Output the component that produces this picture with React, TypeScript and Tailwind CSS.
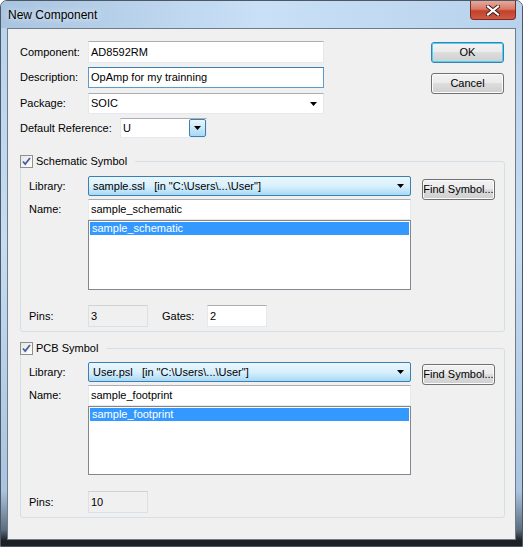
import React from "react";

// small black triangle used by the combo boxes
function Arrow() {
  return (
    <svg width="7" height="4" viewBox="0 0 7 4" className="shrink-0">
      <path d="M0 0h7L3.5 4z" fill="#000" />
    </svg>
  );
}

function TextBox({
  value,
  className = "",
  focused = false,
  disabled = false,
}: {
  value: string;
  className?: string;
  focused?: boolean;
  disabled?: boolean;
}) {
  const border = focused
    ? "border-[#5b9bd0] border-t-[#3d7bad]"
    : disabled
    ? "border-[#dcdfe3] border-t-[#cfd2d6]"
    : "border-[#e3e9ef] border-t-[#abadb3]";
  return (
    <div
      className={`flex items-center border pl-[2px] ${border} ${
        disabled ? "bg-[#f0f0f0]" : "bg-white"
      } ${className}`}
    >
      <span className="whitespace-pre">{value}</span>
    </div>
  );
}

function Combo({ value, className = "" }: { value: string; className?: string }) {
  return (
    <div
      className={`flex items-center justify-between border border-[#e3e9ef] border-t-[#abadb3] bg-white pl-[2px] pr-[6px] ${className}`}
    >
      <span className="whitespace-pre">{value}</span>
      <Arrow />
    </div>
  );
}

function BlueCombo({ value }: { value: string }) {
  return (
    <div className="flex h-[20px] w-[323px] items-center justify-between rounded-[2px] border border-[#3c7fb1] bg-gradient-to-b from-[#eaf6fd] via-[#d9f0fc] to-[#a7d9f5] pl-[4px] pr-[6px]">
      <span className="whitespace-pre">{value}</span>
      <Arrow />
    </div>
  );
}

function Button({
  label,
  className = "",
  focused = false,
}: {
  label: string;
  className?: string;
  focused?: boolean;
}) {
  return (
    <div
      className={`flex items-center justify-center rounded-[3px] border ${
        focused
          ? "border-[#3c7fb1] shadow-[inset_0_0_0_1px_#48d5fd]"
          : "border-[#707070] shadow-[inset_0_0_0_1px_#fcfcfc]"
      } bg-[linear-gradient(to_bottom,#f2f2f2_0%,#ebebeb_49%,#dddddd_50%,#cfcfcf_100%)] ${className}`}
    >
      {label}
    </div>
  );
}

function CheckBox() {
  return (
    <div className="flex h-[13px] w-[13px] shrink-0 items-center justify-center border border-[#8e8f8f] bg-gradient-to-br from-[#e6e6e6] to-white">
      <svg width="9" height="9" viewBox="0 0 9 9">
        <path d="M1 4.5l2.2 2.5L8 1" fill="none" stroke="#4a5f97" strokeWidth="1.8" />
      </svg>
    </div>
  );
}

function ListBox({ item, height }: { item: string; height: string }) {
  return (
    <div className={`w-[323px] border border-[#828790] bg-white pt-px pl-px ${height}`}>
      <div className="flex h-[13px] w-[319px] items-center bg-[#3399ff] pl-[2px] text-white">
        {item}
      </div>
    </div>
  );
}

function Group({
  title,
  library,
  name,
  top,
  libMt,
  findMt,
  listH,
  pinsMt,
  pb,
  pins,
  gates,
}: {
  title: string;
  library: string;
  name: string;
  top: string;
  libMt: string;
  findMt: string;
  listH: string;
  pinsMt: string;
  pb: string;
  pins: string;
  gates?: string;
}) {
  return (
    <div className={`w-[485px] rounded-[3px] border border-[#d5dfe5] ${top} ${pb}`}>
      <div className="-mt-[7px] -ml-px flex h-[13px] w-fit items-center gap-[3px] bg-[#f0f0f0] pr-[8px]">
        <CheckBox />
        <span>{title}</span>
      </div>
      <div className="pl-[8px]">
        <div className={`flex h-[20px] ${libMt}`}>
          <div className="flex w-[59px] items-center">Library:</div>
          <BlueCombo value={library} />
          <Button label="Find Symbol..." className={`ml-[11px] h-[21px] w-[73px] ${findMt}`} />
        </div>
        <div className="mt-[3px] flex">
          <div className="flex h-[21px] w-[59px] items-center">Name:</div>
          <div className="flex flex-col">
            <TextBox value={name} className="h-[21px] w-[323px]" />
            <ListBox item={name} height={listH} />
          </div>
        </div>
        <div className={`flex h-[22px] items-center ${pinsMt}`}>
          <div className="w-[59px]">Pins:</div>
          <TextBox value={pins} disabled className="h-full w-[60px]" />
          {gates && (
            <>
              <div className="ml-[14px] w-[45px]">Gates:</div>
              <TextBox value={gates} className="h-full w-[60px]" />
            </>
          )}
        </div>
      </div>
    </div>
  );
}

export default function App() {
  return (
    <div className="h-[547px] w-[523px] font-['Liberation_Sans',Arial,sans-serif] text-[11px] text-black">
      <div className="flex h-full w-full flex-col rounded-t-[7px] border border-[#4c5866] bg-[linear-gradient(180deg,#b9d3ec_0%,#c5dcf2_45%,#a9c4df_90%,#5d6e80_97%,#1d2126_99%)]">
        {/* title bar */}
        <div className="flex h-[27px] items-start justify-between rounded-t-[6px] bg-gradient-to-r from-[#a9c4e0] via-[#c9e0f6] to-[#b8d2ec]">
          <span className="pl-[7px] pt-[7px] text-[12px] leading-[14px] [text-shadow:0_0_6px_#ffffff]">
            New Component
          </span>
          <div className="mr-[6px] flex h-[19px] w-[46px] items-center justify-center rounded-b-[4px] border border-t-0 border-[#7a2b22] bg-[linear-gradient(to_bottom,#e6a89b_0%,#d97a68_45%,#c3412b_55%,#cf5a43_100%)]">
            <svg width="14" height="11" viewBox="0 0 14 11">
              <path
                d="M2 1.5L12 9.5M12 1.5L2 9.5"
                stroke="#3a1a16"
                strokeWidth="4"
                strokeLinecap="square"
              />
              <path
                d="M2 1.5L12 9.5M12 1.5L2 9.5"
                stroke="#ffffff"
                strokeWidth="2.2"
                strokeLinecap="square"
              />
            </svg>
          </div>
        </div>

        {/* client area */}
        <div className="ml-[6px] h-[512px] w-[509px] border border-[#6f7d8b] bg-[#f0f0f0] pl-[12px] pt-[12px]">
          <div className="flex w-[484px] justify-between">
            <div className="flex flex-col">
              <div className="flex h-[22px] items-center">
                <div className="w-[68px]">Component:</div>
                <TextBox value="AD8592RM" className="h-full w-[236px]" />
              </div>
              <div className="mt-[4px] flex h-[21px] items-center">
                <div className="w-[68px]">Description:</div>
                <TextBox value="OpAmp for my trainning" focused className="h-full w-[236px]" />
              </div>
              <div className="mt-[5px] flex h-[21px] items-center">
                <div className="w-[68px]">Package:</div>
                <Combo value="SOIC" className="h-full w-[236px]" />
              </div>
              <div className="mt-[4px] flex h-[20px] items-center">
                <div className="w-[100px]">Default Reference:</div>
                <div className="flex h-full w-[87px] border border-[#e3e9ef] border-t-[#abadb3] bg-white">
                  <span className="flex flex-1 items-center pl-[2px]">U</span>
                  <div className="flex w-[17px] items-center justify-center rounded-[2px] border border-[#3c7fb1] bg-gradient-to-b from-[#eaf6fd] to-[#a7d9f5]">
                    <Arrow />
                  </div>
                </div>
              </div>
            </div>
            <div className="flex flex-col pt-px">
              <Button label="OK" focused className="h-[21px] w-[73px]" />
              <Button label="Cancel" className="mt-[10px] h-[21px] w-[73px]" />
            </div>
          </div>

          <Group
            title="Schematic Symbol"
            library={'sample.ssl   [in "C:\\Users\\...\\User"]'}
            name="sample_schematic"
            top="mt-[23px]"
            libMt="mt-[8px]"
            findMt="mt-[3px]"
            listH="h-[70px]"
            pinsMt="mt-[15px]"
            pb="pb-[4px]"
            pins="3"
            gates="2"
          />
          <Group
            title="PCB Symbol"
            library={'User.psl   [in "C:\\Users\\...\\User"]'}
            name="sample_footprint"
            top="mt-[16px]"
            libMt="mt-[7px]"
            findMt="mt-[2px]"
            listH="h-[69px]"
            pinsMt="mt-[16px]"
            pb="pb-[4px]"
            pins="10"
          />
        </div>
      </div>
    </div>
  );
}
